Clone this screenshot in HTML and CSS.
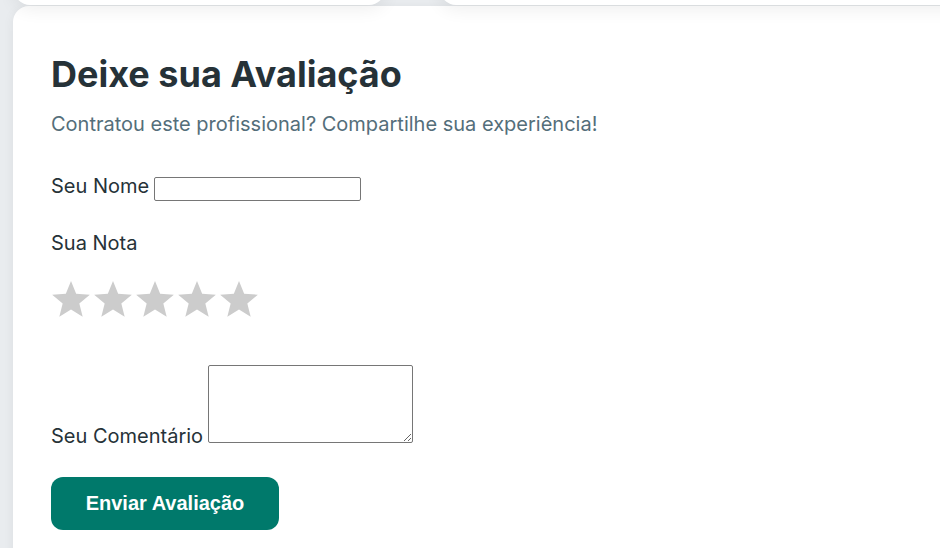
FILE: index.html
```html
<!DOCTYPE html>
<html lang="pt-BR">
<head>
<meta charset="utf-8">
<title>Deixe sua Avaliação</title>
<link rel="stylesheet" href="styles.css">
</head>
<body>
<div class="page">
  <div class="top-row">
    <div class="top-card top-card-a"></div>
    <div class="top-card top-card-b"></div>
  </div>
  <section class="review-card">
    <h2 class="review-title">Deixe sua Avaliação</h2>
    <p class="review-sub">Contratou este profissional? Compartilhe sua experiência!</p>
    <form class="review-form">
      <div class="group group-name">
        <label class="label" for="nome">Seu Nome</label>
        <input class="text-input" type="text" id="nome">
      </div>
      <div class="group group-rating">
        <div class="label label-block">Sua Nota</div>
        <div class="stars">
          <svg class="star" viewBox="0 0 24 24"><path d="M12 1.2l3.1 7.6 8.2.6-6.3 5.3 2 8-7-4.4-7 4.4 2-8L.7 9.4l8.2-.6z"/></svg>
          <svg class="star" viewBox="0 0 24 24"><path d="M12 1.2l3.1 7.6 8.2.6-6.3 5.3 2 8-7-4.4-7 4.4 2-8L.7 9.4l8.2-.6z"/></svg>
          <svg class="star" viewBox="0 0 24 24"><path d="M12 1.2l3.1 7.6 8.2.6-6.3 5.3 2 8-7-4.4-7 4.4 2-8L.7 9.4l8.2-.6z"/></svg>
          <svg class="star" viewBox="0 0 24 24"><path d="M12 1.2l3.1 7.6 8.2.6-6.3 5.3 2 8-7-4.4-7 4.4 2-8L.7 9.4l8.2-.6z"/></svg>
          <svg class="star" viewBox="0 0 24 24"><path d="M12 1.2l3.1 7.6 8.2.6-6.3 5.3 2 8-7-4.4-7 4.4 2-8L.7 9.4l8.2-.6z"/></svg>
        </div>
      </div>
      <div class="group group-comment">
        <label class="label" for="comentario">Seu Comentário</label>
        <textarea class="text-area" id="comentario"></textarea>
      </div>
      <button class="submit-btn" type="button">Enviar Avaliação</button>
    </form>
  </section>
</div>
</body>
</html>
```

FILE: styles.css
```css
html, body {
  margin: 0;
  padding: 0;
}

body {
  background: #e9ecef;
  font-family: Inter, "Noto Sans", sans-serif;
  color: #263238;
  overflow: hidden;
  height: 548px;
}

.page {
  padding-left: 13px;
  width: 1000px;
}

.top-row {
  position: relative;
  z-index: 1;
  display: flex;
  gap: 55px;
  margin-top: -195px;
  margin-left: 1px;
}

.top-card {
  height: 200px;
  background: #fff;
  border-radius: 0 0 16px 16px;
  box-shadow: 0 4px 18px rgba(0, 0, 0, 0.07);
}

.top-card-a {
  width: 371px;
}

.top-card-b {
  flex: 1;
  border-radius: 16px;
}

.review-card {
  margin-top: 1px;
  background: #fff;
  border-radius: 16px 0 0 0;
  box-shadow: 0 2px 12px rgba(0, 0, 0, 0.06);
  padding: 46px 38px 40px;
  min-height: 600px;
}

.review-title {
  margin: 0;
  font-size: 36px;
  font-weight: 700;
  line-height: normal;
  color: #263238;
}

.review-sub {
  margin: 16px 0 38px;
  font-size: 20px;
  line-height: normal;
  color: #546e7a;
}

.review-form {
  margin: 0;
}

.group {
  margin-bottom: 30px;
}

.group-rating {
  margin-bottom: 46px;
}

.group-comment {
  margin-bottom: 29px;
}

.label {
  font-size: 20px;
  color: #263238;
}

.label-block {
  display: block;
}

.text-input {
  box-sizing: border-box;
  width: 207px;
  height: 24px;
  margin: 0;
  padding: 1px 2px;
  border: 1px solid #767676;
  border-radius: 2px;
  font-family: "Liberation Sans", Arial, sans-serif;
  font-size: 13.33px;
  vertical-align: baseline;
}

.stars {
  display: flex;
  gap: 2px;
  margin-top: 24px;
}

.star {
  width: 40px;
  height: 40px;
  fill: #cccccc;
}

.text-area {
  box-sizing: border-box;
  width: 205px;
  height: 78px;
  margin: 0;
  border: 1px solid #767676;
  border-radius: 2px;
  vertical-align: baseline;
  font-family: "Liberation Mono", monospace;
  font-size: 13.33px;
}

.submit-btn {
  display: block;
  width: 228px;
  height: 53px;
  border: none;
  border-radius: 12px;
  background: #00796b;
  color: #fff;
  font-family: "Liberation Sans", Arial, sans-serif;
  font-size: 20px;
  font-weight: 700;
  cursor: pointer;
}
```
